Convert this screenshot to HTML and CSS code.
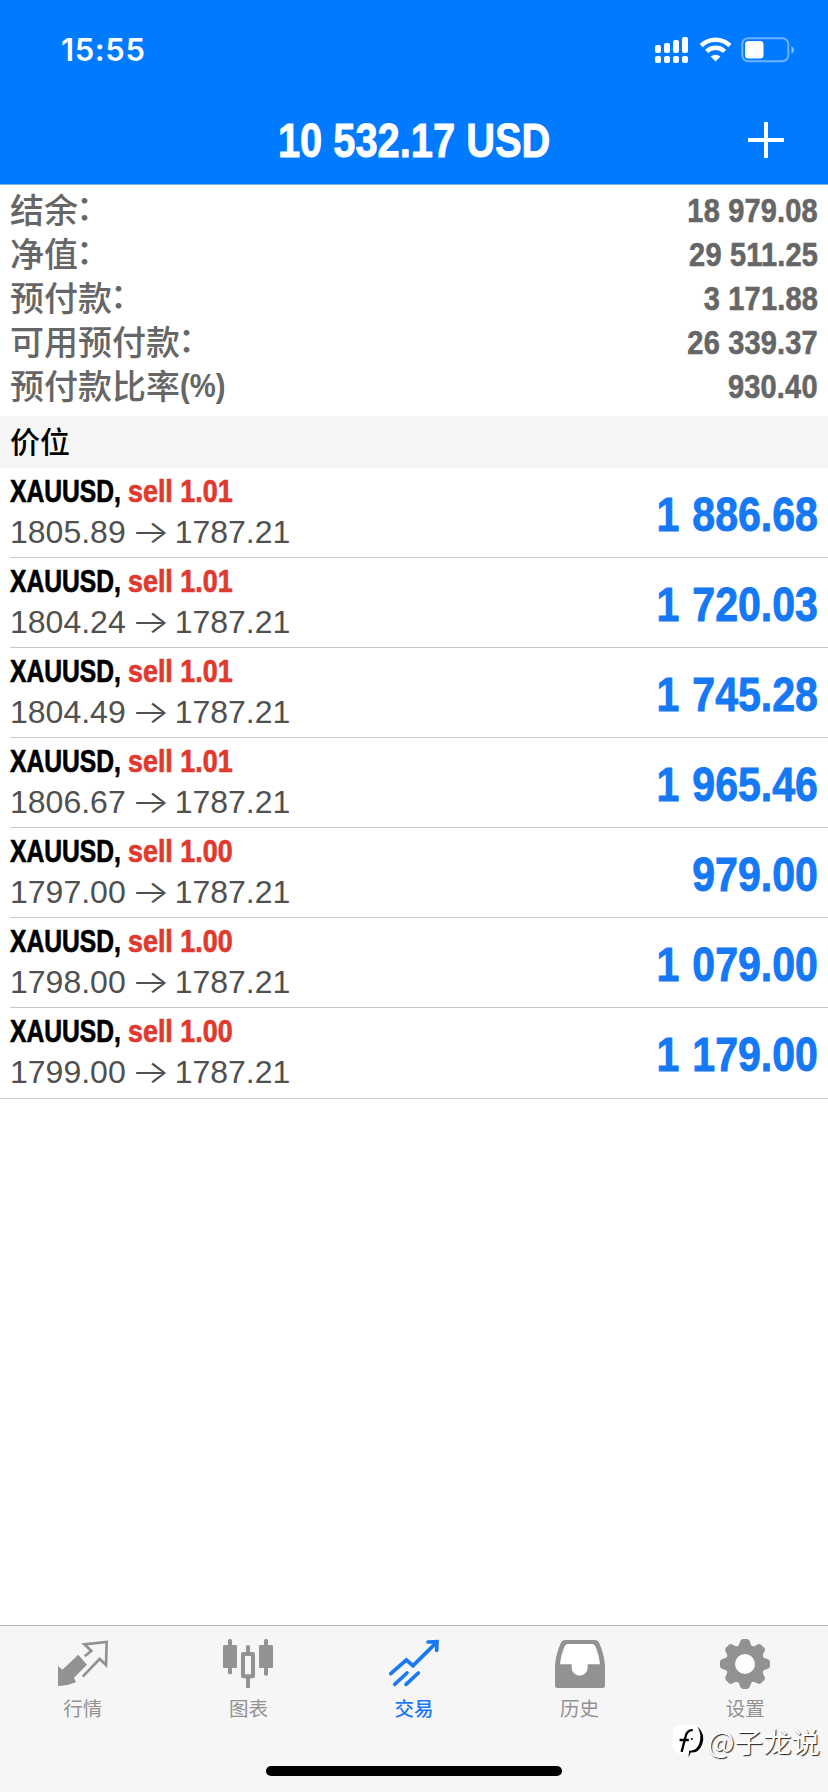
FILE: index.html
```html
<!DOCTYPE html>
<html lang="zh-CN">
<head>
<meta charset="utf-8">
<title>交易</title>
<link rel="stylesheet" href="styles.css">
</head>
<body>
<div class="app">
  <header class="header">
    <div class="status">
      <span class="time">15:55</span>
      <svg class="status-icons" viewBox="0 0 142 30" width="142" height="30" fill="#fff">
        <rect x="0" y="10" width="6" height="8" rx="2"/><rect x="9" y="8" width="6" height="10" rx="2"/><rect x="18" y="5" width="6" height="13" rx="2"/><rect x="27" y="2" width="6" height="16" rx="2"/>
        <rect x="0" y="21" width="6" height="7" rx="2"/><rect x="9" y="21" width="6" height="7" rx="2"/><rect x="18" y="21" width="6" height="7" rx="2"/><rect x="27" y="21" width="6" height="7" rx="2"/>
        <g fill="none" stroke="#fff" stroke-width="4.4"><path d="M46.2 10.6a20.5 20.5 0 0 1 28.800 0"/><path d="M51.6 16.4a13 13 0 0 1 18 0"/></g>
        <path d="M60.6 26.5l-4.900-4.900q4.900-3.800 9.800 0z"/>
        <rect x="87.300" y="3.300" width="46" height="23" rx="6" fill="none" stroke="#6db2ff" stroke-width="2"/>
        <rect x="90" y="6" width="18.500" height="17.500" rx="3.500"/>
        <path d="M136.500 11q5 4 0 8z" fill="#8cc2ff"/>
      </svg>
    </div>
    <div class="nav">
      <h1 class="title"><span class="squeeze">10 532.17 USD</span></h1>
      <svg class="plus" viewBox="0 0 36 36" width="36" height="36"><path d="M18 0v36M0 18h36" stroke="#fff" stroke-width="4"/></svg>
    </div>
  </header>

  <section class="summary">
    <div class="line"><span>结余<i class="colon">：</i></span><b>18 979.08</b></div>
    <div class="line"><span>净值<i class="colon">：</i></span><b>29 511.25</b></div>
    <div class="line"><span>预付款<i class="colon">：</i></span><b>3 171.88</b></div>
    <div class="line"><span>可用预付款<i class="colon">：</i></span><b>26 339.37</b></div>
    <div class="line"><span>预付款比率<i class="pct">(%)</i></span><b>930.40</b></div>
  </section>

  <h2 class="section">价位</h2>

  <main class="positions">
    <div class="row"><div class="info"><div class="name"><span class="sym">XAUUSD,</span><span class="side">sell 1.01</span></div><div class="price"><span>1805.89</span><span class="arrow">→</span><span>1787.21</span></div></div><div class="profit">1 886.68</div></div>
    <div class="row"><div class="info"><div class="name"><span class="sym">XAUUSD,</span><span class="side">sell 1.01</span></div><div class="price"><span>1804.24</span><span class="arrow">→</span><span>1787.21</span></div></div><div class="profit">1 720.03</div></div>
    <div class="row"><div class="info"><div class="name"><span class="sym">XAUUSD,</span><span class="side">sell 1.01</span></div><div class="price"><span>1804.49</span><span class="arrow">→</span><span>1787.21</span></div></div><div class="profit">1 745.28</div></div>
    <div class="row"><div class="info"><div class="name"><span class="sym">XAUUSD,</span><span class="side">sell 1.01</span></div><div class="price"><span>1806.67</span><span class="arrow">→</span><span>1787.21</span></div></div><div class="profit">1 965.46</div></div>
    <div class="row"><div class="info"><div class="name"><span class="sym">XAUUSD,</span><span class="side">sell 1.00</span></div><div class="price"><span>1797.00</span><span class="arrow">→</span><span>1787.21</span></div></div><div class="profit">979.00</div></div>
    <div class="row"><div class="info"><div class="name"><span class="sym">XAUUSD,</span><span class="side">sell 1.00</span></div><div class="price"><span>1798.00</span><span class="arrow">→</span><span>1787.21</span></div></div><div class="profit">1 079.00</div></div>
    <div class="row"><div class="info"><div class="name"><span class="sym">XAUUSD,</span><span class="side">sell 1.00</span></div><div class="price"><span>1799.00</span><span class="arrow">→</span><span>1787.21</span></div></div><div class="profit">1 179.00</div></div>
  </main>

  <footer class="bottom">
    <nav class="tabs">
      <div class="tab">
        <svg viewBox="0 0 150 150"><path d="M61 47L87 77 48 116 54 130Q30 140 4 141Q0 141 0 137V81L13 92z" fill="currentColor"/><path d="M80 52L100 36 79 16 146 9 144 78 125 60 74 113" fill="none" stroke="currentColor" stroke-width="8"/></svg>
        <span>行情</span>
      </div>
      <div class="tab">
        <svg viewBox="0 0 150 150" fill="currentColor"><rect x="0" y="18" width="42" height="69" rx="4"/><rect x="15" y="0" width="12" height="106" rx="5"/><rect x="108" y="18" width="42" height="69" rx="4"/><rect x="123" y="0" width="12" height="110" rx="5"/><rect x="60" y="45" width="30" height="67" rx="1" fill="none" stroke="currentColor" stroke-width="12"/><rect x="69" y="18" width="12" height="26" rx="5"/><rect x="69" y="112" width="12" height="36" rx="5"/></svg>
        <span>图表</span>
      </div>
      <div class="tab active">
        <svg viewBox="0 0 150 150" fill="none" stroke="currentColor" stroke-width="11" stroke-linecap="round"><path d="M5 104L52 63 72 80 142 11"/><path d="M117 9L144 8 143 34M17 136L54 102M51 136L88 102"/></svg>
        <span>交易</span>
      </div>
      <div class="tab">
        <svg viewBox="0 0 150 150"><path fill="#fff" d="M38 15H112L135 76 98 112H50L15 76z"/><path fill="currentColor" fill-rule="evenodd" d="M32 3H118Q129 3 133 13Q147 45 150 78V139Q150 147 142 147H8Q0 147 0 139V78Q3 45 17 13Q21 3 32 3zM38 15H112Q118 15 121 21Q132 45 135 76H98V86A24 24 0 0 1 50 86V76H15Q18 45 29 21Q32 15 38 15z"/></svg>
        <span>历史</span>
      </div>
      <div class="tab">
        <svg viewBox="0 0 150 150" fill="currentColor"><circle cx="75" cy="75" r="44" fill="#fff" stroke="currentColor" stroke-width="28"/><g><path id="t" d="M52 24Q58 18 60 8Q62 0 69 0H81Q88 0 90 8Q92 18 98 24L92 36H58z"/><use href="#t" transform="rotate(45 75 75)"/><use href="#t" transform="rotate(90 75 75)"/><use href="#t" transform="rotate(135 75 75)"/><use href="#t" transform="rotate(180 75 75)"/><use href="#t" transform="rotate(225 75 75)"/><use href="#t" transform="rotate(270 75 75)"/><use href="#t" transform="rotate(315 75 75)"/></g></svg>
        <span>设置</span>
      </div>
    </nav>
    <div class="home"></div>
    <div class="watermark">
      <svg viewBox="0 0 100 105" width="33" height="35"><rect x="0" y="2" width="90" height="88" rx="24" fill="#fff"/><path d="M26 84L38 38Q42 17 60 18M20 48H48" fill="none" stroke="#000" stroke-width="7"/><path d="M74 6Q100 30 88 62Q78 88 54 86L47 100L49 80Q72 82 80 58Q88 30 74 6z"/><circle cx="57" cy="45" r="3"/></svg>
      <span>@子龙说</span>
    </div>
  </footer>
</div>
</body>
</html>
```
FILE: styles.css
```css
* { box-sizing: border-box; }
body {
  margin: 0;
  background: #fff;
  font-family: "Liberation Sans", "Noto Sans CJK SC", sans-serif;
}
.app {
  position: relative;
  display: flex;
  flex-direction: column;
  width: 828px;
  height: 1792px;
  overflow: hidden;
}

/* Header */
.header {
  height: 185px;
  background: #007aff;
  border-bottom: 1px solid #7fb0ee;
  color: #fff;
}
.status {
  display: flex;
  justify-content: space-between;
  align-items: center;
  height: 100px;
  padding: 0 31px 0 61px;
}
.time {
  font: 600 31px/40px Inter, sans-serif;
  letter-spacing: 0.6px;
}
.nav {
  display: grid;
  grid-template-columns: 80px 1fr 80px;
  align-items: center;
  height: 80px;
}
.title {
  grid-column: 2;
  margin: 0;
  padding-top: 2px;
  text-align: center;
  font-size: 48px;
  line-height: 56px;
  white-space: nowrap;
}
.squeeze {
  display: inline-block;
  transform: scaleX(0.83);
  -webkit-text-stroke: 0.9px currentColor;
}

/* Account summary */
.summary {
  height: 231px;
  padding: 4px 10px 0 10px;
  color: #666;
}
.line {
  display: flex;
  justify-content: space-between;
  height: 44px;
  font-size: 34px;
  line-height: 44px;
  font-weight: 500;
  white-space: nowrap;
}
.line b {
  font-size: 33.5px;
  letter-spacing: 0.2px;
  transform: scaleX(0.865);
  transform-origin: right;
  -webkit-text-stroke: 0.6px currentColor;
}
.colon {
  display: inline-block;
  font-style: normal;
  transform: translate(-2px, -3px);
}
.pct {
  display: inline-block;
  font-style: normal;
  font-weight: bold;
  transform: translateY(-2px) scaleX(0.86);
  transform-origin: left;
}
.section {
  height: 52px;
  margin: 0;
  padding-left: 10px;
  background: #f6f6f6;
  font-size: 30px;
  line-height: 54px;
  font-weight: 500;
}

/* Positions */
.positions {
  flex: 1;
  display: flex;
  flex-direction: column;
}
.row {
  display: flex;
  justify-content: space-between;
  height: 90px;
  margin-left: 10px;
  padding-right: 10px;
  border-bottom: 1px solid #c8c7cc;
  white-space: nowrap;
}
.row:last-child { height: 91px; margin-left: 0; padding-left: 10px; }
.name {
  display: flex;
  height: 44px;
  padding-top: 3px;
  font-size: 32px;
  line-height: 40px;
  font-weight: bold;
  -webkit-text-stroke: 0.7px currentColor;
}
.sym {
  width: 118px;
  transform: scaleX(0.77);
  transform-origin: left;
}
.side {
  color: #e0392d;
  transform: scaleX(0.84);
  transform-origin: left;
}
.price {
  display: flex;
  font-size: 32px;
  line-height: 40px;
  color: #505050;
}
.arrow {
  width: 49px;
  text-align: center;
  font-family: Inter, sans-serif;
  font-weight: 300;
  transform: scaleX(1.28);
}
.profit {
  color: #1578f5;
  font-size: 48px;
  font-weight: bold;
  line-height: 94px;
  word-spacing: 2px;
  transform: scaleX(0.855);
  transform-origin: right;
  -webkit-text-stroke: 0.9px currentColor;
}

/* Bottom bar */
.bottom {
  display: flex;
  flex-direction: column;
  align-items: center;
  height: 167px;
  background: #f6f6f6;
  border-top: 1px solid #b4b4b4;
}
.tabs {
  display: grid;
  grid-template-columns: repeat(5, 1fr);
  width: 828px;
  height: 140px;
  padding-top: 13px;
}
.tab {
  display: flex;
  flex-direction: column;
  align-items: center;
  font-size: 19.5px;
  line-height: 28px;
  color: #929292;
}
.tab svg { width: 50px; height: 50px; margin-bottom: 6px; }
.tab.active { color: #1a78f2; font-weight: 500; }
.home {
  width: 296px;
  height: 10px;
  border-radius: 5px;
  background: #000;
}
.watermark {
  position: absolute;
  right: 8px;
  bottom: 31px;
  display: flex;
  align-items: center;
  gap: 2px;
  font: 28.500px/40px "Noto Sans CJK SC", sans-serif;
  color: #fff;
  text-shadow: 1px 1px 1px #222;
}
```
